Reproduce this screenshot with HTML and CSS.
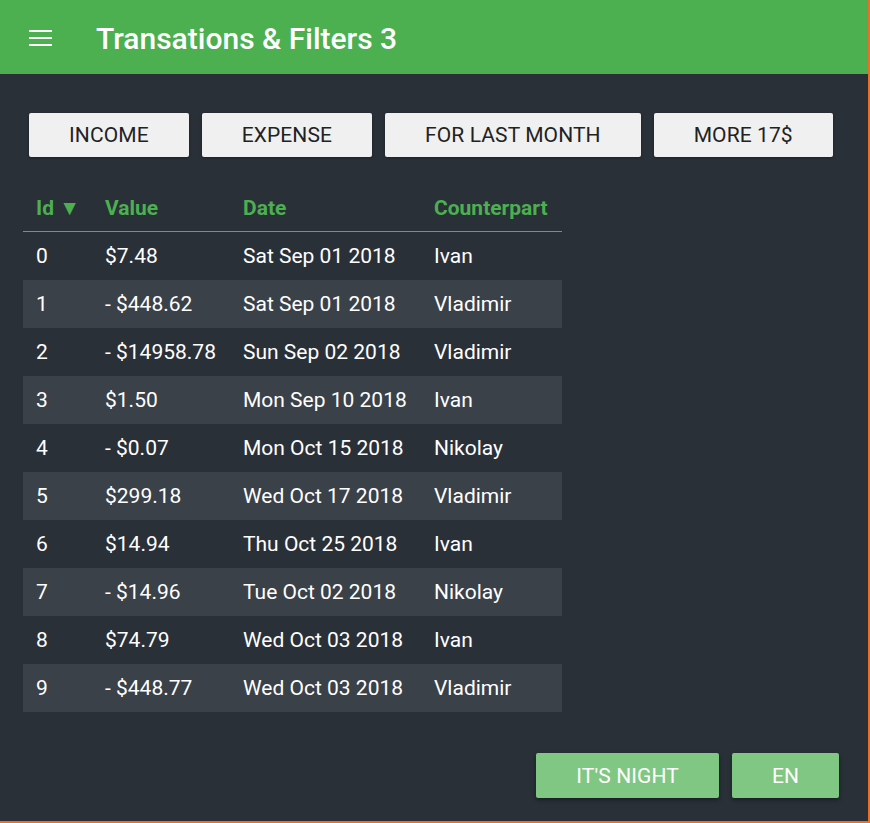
FILE: index.html
```html
<!DOCTYPE html>
<html>
<head>
<meta charset="utf-8">
<link rel="stylesheet" href="styles.css">
</head>
<body>
<div class="app">
  <header class="bar">
    <svg class="menu" width="24" height="18" viewBox="0 0 24 18">
      <rect x="0" y="1" width="23" height="2" fill="#fff"/>
      <rect x="0" y="8" width="23" height="2" fill="#fff"/>
      <rect x="0" y="15" width="23" height="2" fill="#fff"/>
    </svg>
    <h1 class="title">Transations &amp; Filters 3</h1>
  </header>
  <main class="content">
    <div class="filters">
      <button class="btn">INCOME</button>
      <button class="btn">EXPENSE</button>
      <button class="btn">FOR LAST MONTH</button>
      <button class="btn">MORE 17$</button>
    </div>
    <table class="tx">
      <colgroup><col class="c1"><col class="c2"><col class="c3"><col class="c4"></colgroup>
      <thead>
        <tr><th>Id ▼</th><th>Value</th><th>Date</th><th>Counterpart</th></tr>
      </thead>
      <tbody>
        <tr><td>0</td><td>$7.48</td><td>Sat Sep 01 2018</td><td>Ivan</td></tr>
        <tr><td>1</td><td>- $448.62</td><td>Sat Sep 01 2018</td><td>Vladimir</td></tr>
        <tr><td>2</td><td>- $14958.78</td><td>Sun Sep 02 2018</td><td>Vladimir</td></tr>
        <tr><td>3</td><td>$1.50</td><td>Mon Sep 10 2018</td><td>Ivan</td></tr>
        <tr><td>4</td><td>- $0.07</td><td>Mon Oct 15 2018</td><td>Nikolay</td></tr>
        <tr><td>5</td><td>$299.18</td><td>Wed Oct 17 2018</td><td>Vladimir</td></tr>
        <tr><td>6</td><td>$14.94</td><td>Thu Oct 25 2018</td><td>Ivan</td></tr>
        <tr><td>7</td><td>- $14.96</td><td>Tue Oct 02 2018</td><td>Nikolay</td></tr>
        <tr><td>8</td><td>$74.79</td><td>Wed Oct 03 2018</td><td>Ivan</td></tr>
        <tr><td>9</td><td>- $448.77</td><td>Wed Oct 03 2018</td><td>Vladimir</td></tr>
      </tbody>
    </table>
    <div class="footer">
      <button class="btn green">IT'S NIGHT</button>
      <button class="btn green">EN</button>
    </div>
  </main>
</div>
</body>
</html>
```
FILE: styles.css
```css
html, body {
  margin: 0;
  padding: 0;
}
body {
  background: #e8702a;
  font-family: Roboto, "Liberation Sans", sans-serif;
  width: 870px;
  height: 823px;
  overflow: hidden;
}
.app {
  width: 868px;
  height: 821px;
  background: #2a3038;
  display: flex;
  flex-direction: column;
}
.bar {
  height: 74px;
  background: #4caf50;
  display: flex;
  align-items: center;
  flex-shrink: 0;
}
.menu {
  margin-left: 29px;
  margin-top: 2px;
}
.title {
  margin: 2px 0 0 43px;
  color: #fff;
  font-size: 30px;
  font-weight: 500;
  letter-spacing: 0;
}
.content {
  padding: 39px 0 0 23px;
  display: flex;
  flex-direction: column;
}
.filters {
  display: flex;
  gap: 13px;
  padding-left: 6px;
}
.btn {
  height: 44px;
  padding: 0 40px;
  border: none;
  border-radius: 2px;
  background: #f0f0f0;
  color: #222;
  font-family: Roboto, "Liberation Sans", sans-serif;
  font-size: 21px;
  font-weight: 400;
  letter-spacing: 0.1px;
  box-shadow: 0 1px 3px rgba(0,0,0,0.35);
  cursor: pointer;
}
.tx {
  margin-top: 27px;
  border-collapse: collapse;
  table-layout: fixed;
  width: 539px;
  color: #fff;
  font-size: 21px;
}
.c1 { width: 69px; }
.c2 { width: 138px; }
.c3 { width: 191px; }
.c4 { width: 141px; }
.tx th {
  height: 47px;
  text-align: left;
  color: #4caf50;
  font-weight: 700;
  padding: 0 13px;
  border-bottom: 1px solid #4caf50;
  white-space: nowrap;
}
.tx td {
  height: 48px;
  padding: 0 13px;
  white-space: nowrap;
}
.tx tbody tr:nth-child(even) {
  background: #3a4149;
}
.footer {
  display: flex;
  justify-content: flex-end;
  gap: 13px;
  margin-top: 41px;
  padding-right: 29px;
}
.btn.green {
  height: 45px;
  background: #81c784;
  color: #fff;
  box-shadow: 0 2px 4px rgba(0,0,0,0.4);
}
```
